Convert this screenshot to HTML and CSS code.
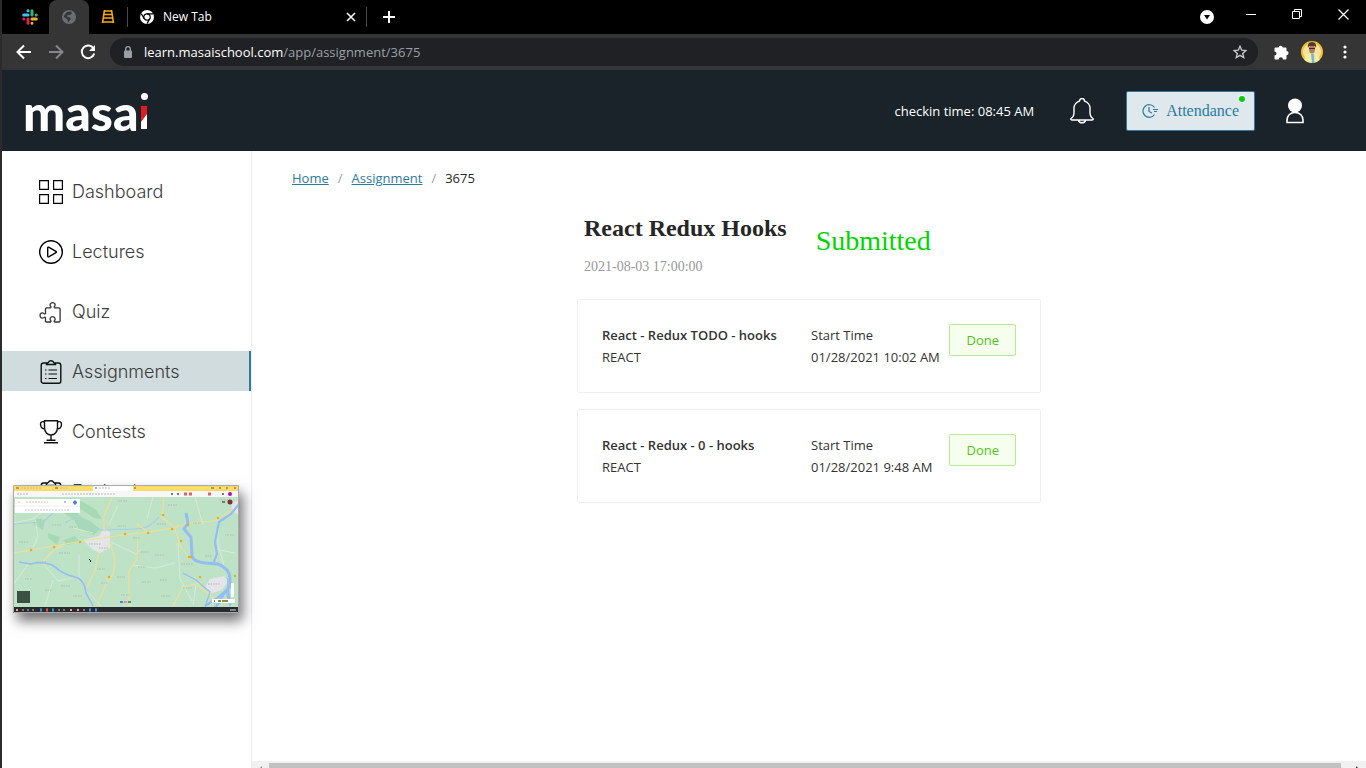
FILE: index.html
```html
<!DOCTYPE html>
<html lang="en">
<head>
<meta charset="utf-8">
<title>Masai - Assignment</title>
<link rel="stylesheet" href="styles.css">
</head>
<body>
<div class="window">
  <div class="tabs">
    <div class="tab tab-pinned">
      <svg width="16" height="16" viewBox="0 0 16 16" stroke-width="3" stroke-linecap="round" fill="none"><path d="M6 1.7h.1M1.7 6H6" stroke="#36c5f0"/><path d="M10 1.7V6M14.2 6h.1" stroke="#2eb67d"/><path d="M10 10h4.3M10 14.2v.1" stroke="#ecb22e"/><path d="M6 10v4.3M1.7 10h.1" stroke="#e01e5a"/></svg>
    </div>
    <div class="tab tab-active">
      <svg width="14" height="14" viewBox="0 0 14 14"><circle cx="7" cy="7" r="7" fill="#6a6e73"/><path d="M5 2 9 1.500 10 3.500 7.500 5 5 5.500 5.500 7 8.500 7.500 8.500 9.500 6 12.500 5.500 9.500 2 7 2.500 5z" fill="#35363a"/></svg>
    </div>
    <div class="tab tab-pinned">
      <svg width="14" height="14" viewBox="0 0 14 14" fill="none" stroke="#f9ab00"><path d="M3 1h8M3 4.500h8M2.500 8h9M1 12h12" stroke-width="1.600"/><path d="M3.500 0 1.500 13M10.500 0l2 13" stroke-width="1.600"/></svg>
    </div>
    <div class="tab tab-wide">
      <svg width="14" height="14" viewBox="0 0 14 14"><circle cx="7" cy="7" r="7" fill="#fff"/><circle cx="7" cy="7" r="3.200" fill="none" stroke="#000" stroke-width="1.200"/><path d="M7 3.800h6M4.200 8.600 1.300 3.600M9.800 8.600 7 13.600" stroke="#000" stroke-width="1.200"/></svg>
      <span class="tab-title">New Tab</span>
      <button class="bare" aria-label="Close tab"><svg width="10" height="10" viewBox="0 0 10 10" stroke="#fff" stroke-width="1.600"><path d="M1 1l8 8M9 1 1 9"/></svg></button>
    </div>
    <button class="bare new-tab" aria-label="New tab"><svg width="12" height="12" viewBox="0 0 12 12" stroke="#fff" stroke-width="2"><path d="M6 0v12M0 6h12"/></svg></button>
    <div class="window-buttons">
      <button class="bare" aria-label="Search tabs"><svg width="14" height="14" viewBox="0 0 14 14"><circle cx="7" cy="7" r="7" fill="#fff"/><path d="M4 5h6L7 9.500z" fill="#000"/></svg></button>
      <div class="controls">
        <button class="bare" aria-label="Minimize"><svg width="10" height="10" viewBox="0 0 10 10" stroke="#fff"><path d="M0 5.500h10"/></svg></button>
        <button class="bare" aria-label="Restore"><svg width="10" height="10" viewBox="0 0 10 10" stroke="#fff" fill="none"><path d="M.5 2.500h7v7h-7zM2.500 2.500v-2h7v7h-2"/></svg></button>
        <button class="bare" aria-label="Close"><svg width="11" height="11" viewBox="0 0 11 11" stroke="#fff" stroke-width="1.200"><path d="M.5.5l10 10M10.500.5l-10 10"/></svg></button>
      </div>
    </div>
  </div>

  <div class="toolbar">
    <button class="bare" aria-label="Back"><svg width="16" height="16" viewBox="0 0 16 16" fill="none" stroke="#fff" stroke-width="2"><path d="M15 8H2M8 1.500 1.500 8 8 14.500"/></svg></button>
    <button class="bare" aria-label="Forward"><svg width="16" height="16" viewBox="0 0 16 16" fill="none" stroke="#85878a" stroke-width="2"><path d="M1 8h13M8 1.500 14.500 8 8 14.500"/></svg></button>
    <button class="bare" aria-label="Reload"><svg width="16" height="16" viewBox="0 0 16 16" fill="none" stroke="#fff" stroke-width="2"><path d="M13.500 4.500A6.300 6.300 0 1 0 14.200 9.500"/><path d="M15 1v6H9z" fill="#fff" stroke="none"/></svg></button>
    <div class="address">
      <svg width="10" height="12" viewBox="0 0 10 12"><path d="M2 4.500h6a1 1 0 0 1 1 1V11a1 1 0 0 1-1 1H2a1 1 0 0 1-1-1V5.500a1 1 0 0 1 1-1z" fill="#9aa0a6"/><path d="M2.700 5V3a2.300 2.300 0 0 1 4.600 0v2" fill="none" stroke="#9aa0a6" stroke-width="1.300"/></svg>
      <span class="url">learn.masaischool.com<span class="url-path">/app/assignment/3675</span></span>
      <button class="bare" aria-label="Bookmark"><svg width="14" height="14" viewBox="0 0 14 14" fill="none" stroke="#c5c7ca" stroke-width="1.400"><path d="M7 1.300l1.700 3.900 4.200.4-3.200 2.800 1 4.200L7 10.400l-3.700 2.200 1-4.200L1.100 5.600l4.200-.4z"/></svg></button>
    </div>
    <button class="bare" aria-label="Extensions"><svg width="15" height="15" viewBox="0 0 15 15" fill="#fff"><path d="M1.500 2.500H4.500a2.200 2.200 0 0 1 4.300 0H11.500a1 1 0 0 1 1 1V6a2 2 0 0 1 0 4.200V13.500a1 1 0 0 1-1 1H9a2.100 2.100 0 0 0-4.300 0H1.500a1 1 0 0 1-1-1V10.400a2 2 0 0 0 0-4V3.500a1 1 0 0 1 1-1z"/></svg></button>
    <svg class="avatar" width="22" height="22" viewBox="0 0 22 22"><circle cx="11" cy="11" r="11" fill="#f5c033"/><circle cx="11" cy="11" r="9" fill="#fae3a0"/><path d="M3.500 19c0-5 3-7 7.500-7s7 2 7.500 7A11 11 0 0 1 3.500 19z" fill="#edf0a5"/><path d="M10 13h3l.5 9H11z" fill="#7fb4d8"/><ellipse cx="11" cy="8" rx="3" ry="4.500" fill="#b87a5e"/><path d="M7 7c-1-5 2-6 4-6s5 1 4 6l-1-2H8z" fill="#56382f"/><path d="M8 7.500h6" stroke="#333"/></svg>
    <button class="bare" aria-label="Menu"><svg width="4" height="14" viewBox="0 0 4 14" fill="#fff"><circle cx="2" cy="2" r="1.600"/><circle cx="2" cy="7" r="1.600"/><circle cx="2" cy="12" r="1.600"/></svg></button>
  </div>

  <header class="header">
    <a class="logo" href="#" aria-label="masai">
      <span>masa</span>
      <svg width="8" height="37" viewBox="0 0 8 37"><circle cx="4.500" cy="3.500" r="3.500" fill="#fff"/><path d="M1 13h6v22H1z" fill="#e01b22"/><path d="M7 21v15H1v-7z" fill="#fff"/></svg>
    </a>
    <span class="checkin">checkin time: 08:45 AM</span>
    <button class="bare" aria-label="Notifications"><svg width="24" height="26" viewBox="0 0 24 26" fill="none" stroke="#fff" stroke-width="1.400"><path d="M1 20.500c2.500-1.500 3-3 3-6V10c0-3 2.500-6 5.500-7a2.500 2.500 0 0 1 5 0c3 1 5.500 4 5.500 7v4.500c0 3 .5 4.500 3 6 .5 1 0 1.500-1 1.500H2c-1 0-1.500-.5-1-1.500zM8.500 22.500a3.600 3 0 0 0 7 0"/></svg></button>
    <button class="attendance">
      <svg width="16" height="14" viewBox="0 0 16 14" fill="none" stroke="#2c7a9f" stroke-width="1.200"><path d="M12.500 3.500A6.300 6.300 0 1 0 12.500 10.500M7 3v4.500l3 1.500M11 5.500h5M12 7.500h3"/></svg>
      Attendance
      <span class="online"></span>
    </button>
    <button class="bare" aria-label="Profile"><svg width="18" height="26" viewBox="0 0 18 26"><circle cx="9" cy="7.500" r="7" fill="#fff"/><path d="M1 24.500V22c0-4 3-7.500 8-7.500s8 3.500 8 7.500v2.500z" fill="none" stroke="#fff" stroke-width="1.600"/></svg></button>
  </header>

  <div class="body">
    <nav class="sidebar">
      <a class="item" href="#"><svg width="24" height="24" viewBox="0 0 24 24" fill="none" stroke="#000" stroke-width="1.200"><path d="M.6.6h8.800v8.800H.6zM14.600.6h8.800v8.800h-8.800zM.6 14.600h8.800v8.800H.6zM14.600 14.600h8.800v8.800h-8.800z"/></svg>Dashboard</a>
      <a class="item" href="#"><svg width="24" height="24" viewBox="0 0 24 24" fill="none" stroke="#000" stroke-width="1.400"><circle cx="12" cy="12" r="11.300"/><path d="M8.700 8.200c0-1 .6-1.300 1.400-.9l6.800 4c.7.400.7 1 0 1.400l-6.800 4c-.8.400-1.400.1-1.400-.9z"/></svg>Lectures</a>
      <a class="item" href="#"><svg width="24" height="24" viewBox="0 0 24 24" fill="none" stroke="#333" stroke-width="1.300"><path d="M6.500 22V17.500c-1-1-1.300-.3-2 .2-1.200.8-3.500.3-3.500-2.200s2.300-3 3.500-2.200c.7.500 1 1.200 2 .2V9c0-.7.400-1.100 1-1.100h4c1-.8.300-1.200-.1-1.800-.9-1.300 0-3.500 2.200-3.500s3.100 2.200 2.200 3.500c-.4.600-1.100 1 0 1.800h4c.8 0 1.300.5 1.300 1.300v11.500c0 .8-.5 1.300-1.300 1.300h-4c-1.100-.8-.4-1.200 0-1.800.9-1.300 0-3.500-2.200-3.500s-3.100 2.200-2.200 3.500c.4.600 1.100 1 .1 1.800h-4c-.6 0-1 0-1-.5z"/></svg>Quiz</a>
      <a class="item item-active" href="#" aria-current="page"><svg width="24" height="24" viewBox="0 0 24 24" fill="none" stroke="#111" stroke-width="1.400"><path d="M8 3H4.500A2.300 2.300 0 0 0 2.200 5.300v15.900a2 2 0 0 0 2 2h15.600a2 2 0 0 0 2-2V5.300A2.300 2.300 0 0 0 19.500 3H16M7.500 4.500V3.700c0-.5.500-.7 1-.7.900 0 1-.4 1.200-1 .4-1.700 4.200-1.700 4.600 0 .2.600.3 1 1.200 1 .5 0 1 .2 1 .7v.8z"/><path d="M9.500 10H18M9.500 14H18M9.500 18.500H18M6 10h1.500M6 14h1.500M6 18.500h1.500" stroke-width="1.100"/></svg>Assignments</a>
      <a class="item" href="#"><svg width="24" height="24" viewBox="0 0 24 24" fill="none" stroke="#111" stroke-width="1.400"><path d="M5.500.8h13v6.700c0 4.500-3 7.500-6.500 7.500S5.500 12 5.500 7.500zM5.500 2c-2-.8-4-.3-4 2 0 3 1.300 5 4.500 5M18.500 2c2-.8 4-.3 4 2 0 3-1.300 5-4.500 5M12 15v5M7.500 20.300h9M5 22.800h14"/></svg>Contests</a>
      <a class="item" href="#"><svg width="24" height="24" viewBox="0 0 24 24" fill="none" stroke="#111" stroke-width="1.400"><path d="M8 3H4.500A2.300 2.300 0 0 0 2.200 5.300v15.900a2 2 0 0 0 2 2h15.600a2 2 0 0 0 2-2V5.300A2.300 2.300 0 0 0 19.500 3H16M7.500 5.500V3.700l2.200-1.700c.4-1.700 4.200-1.700 4.600 0l2.200 1.700v1.800z"/></svg>Evaluations</a>
    </nav>

    <main class="main">
      <div class="content">
        <nav class="breadcrumb" aria-label="Breadcrumb">
          <a href="#">Home</a><span class="slash">/</span><a href="#">Assignment</a><span class="slash">/</span><span>3675</span>
        </nav>
        <section class="assignment">
          <div class="summary">
            <div>
              <h1>React Redux Hooks</h1>
              <time datetime="2021-08-03T17:00">2021-08-03 17:00:00</time>
            </div>
            <p class="status">Submitted</p>
          </div>
          <article class="card">
            <div><h2>React - Redux TODO - hooks</h2><p>REACT</p></div>
            <div><p>Start Time</p><p>01/28/2021 10:02 AM</p></div>
            <button class="done">Done</button>
          </article>
          <article class="card">
            <div><h2>React - Redux - 0 - hooks</h2><p>REACT</p></div>
            <div><p>Start Time</p><p>01/28/2021 9:48 AM</p></div>
            <button class="done">Done</button>
          </article>
        </section>
      </div>
      <div class="scrollbar">
        <svg width="17" height="7" viewBox="0 0 17 7"><path d="M10 5v2H8z" fill="#888"/></svg>
        <div class="thumb"></div>
        <svg width="25" height="7" viewBox="0 0 25 7"><path d="M15 5v2h2z" fill="#333"/></svg>
      </div>
    </main>
  </div>

  <svg class="preview" viewBox="0 0 226 128" role="img" aria-label="Shared screen with a map">
    <defs><filter id="soft"><feGaussianBlur stdDeviation=".5"/></filter></defs>
    <rect width="226" height="128" fill="#bee2c6"/>
    <g filter="url(#soft)" fill="none">
      <path d="M42 13q6 8 18 10l8 9 9 4 10 8-6 6-15-6-5-9-12-8zM57 13l13 4 13 8 6 9-8-1-12-8-12-3zM22 33l10 2-2 10-9-5zM35 48l12 4-3 8-9-7zM50 55l12-4 4 6-12 3z" fill="#a6dab4"/>
      <path d="M70 55l16-4 5-8 6 4v16l-10 5-8-4z" fill="#e4e5e8"/>
      <path d="M192 102l5-8 14-3 4 5-6 9-12 4zM218 18l8-3v15l-7-4z" fill="#e4e5e8"/>
      <g stroke="#d8eedd" stroke-width=".8"><path d="M0 38l20-4 12-9M22 33l3 18-5 12M105 20 96 40M66 70v26M120 80l22 3 20-5M140 12l-6 22M30 78l15 18 18-4M40 95l-8 26M0 100l16-22M98 57l25 12 5-5M165 58l2 36 12 22M190 40l-8-28M205 30v30l6 20M180 120l3-20M76 108l12 13M202 64l20 4M60 43l20 5"/></g>
      <path d="M0 39l30-2 10-9M52 38q12-8 18 0t24 7 30-1 22-12" stroke="#abcde5" stroke-width="1.200"/>
      <g stroke="#f2df91" stroke-width="1.100"><path d="M0 68l18-3 23-4 29-5 25-4 40-5 26-4 14-5 26-2 25-15M91 46V31l8-18M86 66l-4 20-8 16M97 57l5 18-2 14-8 12-8 20M125 54l-1 20-8 12v35M151 12l-2 20 12 10 7 20 9 12M135 47l-11-8M30 77q10-14 20-16M160 121l10-19 20-5M185 100l20 17"/></g>
      <g stroke="#94bdf5"><path d="M6 77l12 2q7-2 13-1t8 2 8 6l8 4 10 3q7 4 8 15l7 13" stroke-width="1.500"/><path d="M173 28l2 10-4 6 7 8 1 19q2 6 13 7l13 1q12 5 12 14l0 8-7 9-11 19" stroke-width="3"/><path d="M200 79l4-10-2-12 4-20 12-8 8-10M192 121l12-8 11-9 2 17" stroke-width="2.200"/><path d="M170 88l13 7 14 12-5 15M215 93l-1 18 4 9" stroke-width="1.200"/></g>
      <g stroke="#e9ad20" stroke-width="2.500" stroke-linecap="round"><path d="M18 65h.1M41 62h.1M67 57h.1M112 49h.1M135 48h.1M159 44h.1M175 40h.1M150 30h.1M96 92h.1M168 56h.1M176 72h2M187 92h.1M205 33h.1M222 91h.1"/></g>
      <g stroke="#a9bdb0" stroke-width="1.200" stroke-dasharray="1.500 1"><path d="M6 57h10M24 77h9M39 40h9M46 68h11M56 42h8M76 59h12M86 63h9M105 16h9M105 41h8M120 53h7M128 67h8M142 70h10M125 82h8M144 39h10M155 20h9M180 38h8M206 15h11M192 71h7M48 101h10M60 111h9M32 105h8M65 123h9M88 98h7M104 92h8M129 97h10M147 95h7M168 79h12M170 103h9M195 99h12M148 111h10M108 110h8M4 110h8M212 50h10M12 94h7M84 84h8"/></g>
    </g>
    <path d="M76 74l2 2-1 1" fill="none" stroke="#222"/>
    <rect x="4" y="106" width="13" height="12" fill="#3d5044"/>
    <rect x="2" y="14" width="65" height="14" fill="#fff"/><path d="M2 21h65" stroke="#eee"/>
    <path d="M5 17h3M13 17h22M12 25h45" stroke="#ccc" stroke-dasharray="2 1"/><path d="M51 17h2" stroke="#888"/><path d="M60 17.500h4M62 15.500v4" stroke="#4584e7" stroke-width="2"/>
    <circle cx="217" cy="17" r="2.500" fill="#7d3038"/><path d="M209 17h3" stroke="#777" stroke-width="2"/>
    <path d="M218 98h3v14h-3zM199 114h23v4h-23z" fill="#fff"/><path d="M201 116h1M205 116h3M209 116h6" stroke="#9b8a3e" stroke-width="2"/>
    <path d="M107 117h3" stroke="#4285f4" stroke-width="2"/><path d="M111 117h3" stroke="#e88" stroke-width="2"/><path d="M115 117h3" stroke="#4a9e7c" stroke-width="2"/>
    <rect width="226" height="6" fill="#ffdc67"/><rect x="80" width="40" height="6" fill="#fff"/><rect y="6" width="226" height="6" fill="#f7f7f8"/>
    <path d="M3 3h3M42 3h3M82 3h2M121 3h2M198 3h3M206 3h2M213 3h2M221 3h2" stroke="#635b42"/><path d="M8 3h20M47 3h8M86 3h11M49 9h53M4 9h12" stroke="#bbb" stroke-dasharray="2 1"/><path d="M158 9h2M164 9h2M209 9h2" stroke="#777" stroke-width="2"/><path d="M171 9h3M176 9h3M195 9h3" stroke="#df6262" stroke-width="3"/><circle cx="217" cy="9" r="2" fill="#a21bb5"/>
    <rect y="122" width="226" height="6" fill="#292a2e"/>
    <path d="M3 125h2M57 125h2M64 125h2" stroke="#f0a09a" stroke-width="2"/><path d="M9 125h15M45 125h7" stroke="#777" stroke-width="2" stroke-dasharray="2 3"/><path d="M27 125h2M39 125h2M76 125h2M82 125h2" stroke="#3b91d6" stroke-width="3"/><path d="M33 125h2" stroke="#e25345" stroke-width="3"/><path d="M70 125h2M217 125h6" stroke="#ddd" stroke-width="1"/>
    <path d="M.5.5h225v127H.5z" fill="none" stroke="#aaa"/>
  </svg>
</div>
</body>
</html>
```

FILE: styles.css
```css
* { box-sizing: border-box; }

body {
  margin: 0;
  font-family: "Open Sans", "Noto Sans", sans-serif;
  font-size: 13px;
  line-height: 22px;
  color: #333;
  background: #fff;
}

h1, h2, p { margin: 0; }
svg { display: block; flex: none; }

.bare {
  padding: 0;
  border: 0;
  background: none;
}

.window {
  position: relative;
  display: flex;
  flex-direction: column;
  height: 100vh;
  overflow: hidden;
  border-left: 2px solid #2b2b2b;
}

/* Browser tabs */
.tabs {
  display: flex;
  align-items: center;
  height: 34px;
  background: #000;
  color: #fff;
  font-size: 12px;
}

.tab {
  display: flex;
  align-items: center;
  justify-content: center;
  height: 34px;
}

.tab-pinned { width: 38px; }
.tab-pinned:first-child { width: 47px; padding-left: 8px; }

.tab-active {
  width: 40px;
  background: #353535;
  border-radius: 8px 8px 0 0;
}

.tab-wide {
  width: 240px;
  height: 20px;
  justify-content: flex-start;
  gap: 9px;
  padding: 0 10px 0 12px;
  border: solid #4a4a4a;
  border-width: 0 1px;
}

.tab-title { flex: 1; }
.new-tab { margin-left: 16px; }

.window-buttons {
  display: flex;
  align-items: center;
  gap: 32px;
  margin-left: auto;
  padding-right: 17px;
}

.controls {
  display: flex;
  gap: 36px;
  padding-bottom: 6px;
}

/* Address row */
.toolbar {
  display: flex;
  align-items: center;
  gap: 16px;
  height: 36px;
  padding: 0 19px 0 14px;
  background: #353535;
}

.toolbar .avatar { margin: 0 4px 0 -4px; }

.address {
  display: flex;
  flex: 1;
  align-items: center;
  gap: 11px;
  height: 28px;
  margin-left: -2px;
  padding: 0 11px 0 13px;
  border-radius: 14px;
  background: #202124;
  color: #fff;
}

.url { flex: 1; }
.url-path { color: #9aa0a6; }

/* Site header */
.header {
  display: flex;
  align-items: center;
  height: 81px;
  padding: 0 62px 0 21px;
  background: #192329;
  color: #fff;
}

.logo {
  display: flex;
  align-items: flex-end;
  margin-right: auto;
  padding-top: 2px;
  color: #fff;
  font: 900 50px/50px Lato, sans-serif;
  text-decoration: none;
}

.logo svg { margin: 0 0 7px 1px; }

.checkin { margin-right: 36px; }

.attendance {
  position: relative;
  display: flex;
  align-items: center;
  gap: 8px;
  height: 40px;
  margin: 0 31px 0 32px;
  padding: 0 15px;
  border: 1px solid #2c7a9f;
  border-radius: 2px;
  background: #dfe8ec;
  color: #2c7a9f;
  font: 16px "Liberation Serif", serif;
}

.online {
  position: absolute;
  top: 4px;
  right: 9px;
  width: 6px;
  height: 6px;
  border-radius: 50%;
  background: #00cf00;
  box-shadow: 0 0 0 1px #fff;
}

.body {
  display: flex;
  flex: 1;
  min-height: 0;
}

/* Sidebar */
.sidebar {
  display: flex;
  flex: none;
  flex-direction: column;
  gap: 20px;
  width: 250px;
  padding-top: 20px;
  overflow: hidden;
  border-right: 1px solid #ececf2;
}

.item {
  display: flex;
  flex: none;
  align-items: center;
  gap: 9px;
  height: 40px;
  padding: 2px 0 0 37px;
  color: #3c3c3c;
  font: 300 18px/38px Inter, sans-serif;
  text-decoration: none;
}

.item-active {
  border-right: 2px solid #2c7a9f;
  background: #d0dcde;
}

/* Assignment page */
.main {
  display: flex;
  flex: 1;
  flex-direction: column;
  min-width: 0;
}

.content { flex: 1; }

.breadcrumb {
  display: flex;
  padding: 16px 40px 0;
  color: #262626;
}

.breadcrumb a { color: #2c7a9f; }
.slash { margin: 0 9px; color: #999; }

.assignment {
  max-width: 464px;
  margin: 24px auto 0;
}

.summary {
  display: flex;
  gap: 29px;
  padding: 0 7px;
  margin-bottom: 21px;
  font-family: "Liberation Serif", serif;
}

.summary h1 {
  margin-bottom: 13px;
  color: #262626;
  font-size: 24px;
  line-height: 30px;
}

.summary time {
  display: block;
  color: #999;
  font-size: 14px;
}

.status {
  padding-top: 12px;
  color: #00d600;
  font-size: 28px;
  line-height: 32px;
}

.card {
  display: grid;
  grid-template-columns: 209px 1fr auto;
  margin-bottom: 16px;
  padding: 24px;
  border: 1px solid #f0f0f0;
  border-radius: 2px;
}

.card h2 {
  font-size: 13px;
  font-weight: 600;
  line-height: 22px;
}

.done {
  height: 32px;
  padding: 0 16px;
  border: 1px solid #b7eb8f;
  border-radius: 2px;
  background: #f6ffed;
  color: #52c41a;
  font: 13px/22px "Open Sans", sans-serif;
}

.scrollbar {
  display: flex;
  align-items: flex-end;
  height: 7px;
  background: #f1f1f1;
}

.thumb {
  flex: 1;
  height: 5px;
  background: #c1c1c1;
}

/* Screen-share preview floating over the page */
.preview {
  position: absolute;
  left: 11px;
  top: 485px;
  width: 226px;
  height: 128px;
  box-shadow: 4px 8px 12px rgba(0, 0, 0, .55);
}
```
